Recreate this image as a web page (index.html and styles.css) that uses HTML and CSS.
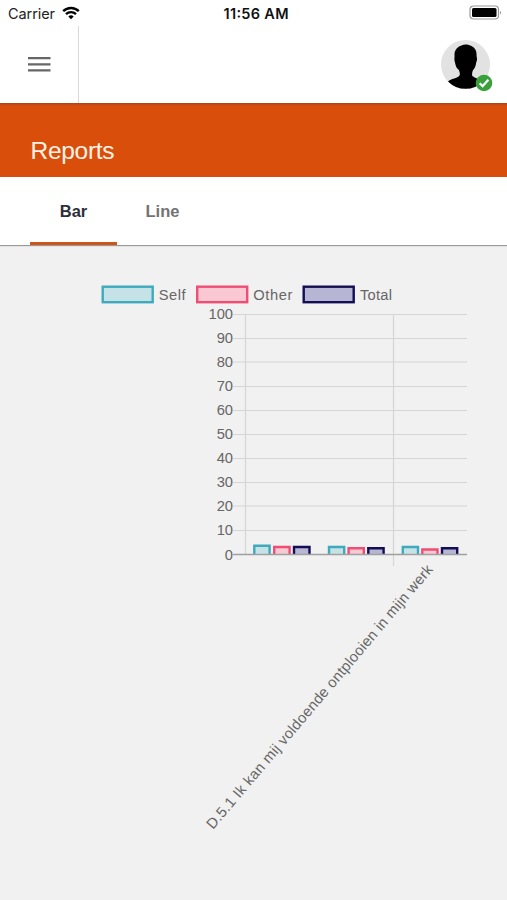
FILE: index.html
```
<!DOCTYPE html>
<html lang="en">
<head>
  <meta charset="UTF-8" />
  <title>Reports</title>
  <meta name="viewport" content="width=device-width, initial-scale=1" />
  <link rel="stylesheet" href="styles.css">
</head>
<body>
  <div class="statusbar">
    <div class="carrier">
      <svg class="carrier-name" width="48" height="20"><text x="0" y="16" textLength="47">Carrier</text></svg>
      <svg class="wifi" width="18" height="14" viewBox="0 0 18 14">
        <path d="M1.2 5.1a11.2 11.2 0 0 1 15.6 0" />
        <path d="M4 8.1a7.2 7.2 0 0 1 10 0" />
        <path class="wifi-dot" d="M9 13.2 6.3 10.5a3.9 3.9 0 0 1 5.4 0z" />
      </svg>
    </div>
    <svg class="clock" width="68" height="20"><text x="2.500" y="16" textLength="65">11:56 AM</text></svg>
    <svg class="battery" width="33" height="16" viewBox="0 0 33 16">
      <rect class="battery-case" x="1" y="1" width="28.5" height="13" rx="3.5" />
      <rect x="3" y="3" width="24.5" height="9" rx="1.5" />
      <path class="battery-tip" d="M31 5.5q1.8 2 0 4z" />
    </svg>
  </div>

  <header class="topbar">
    <div class="menu">
      <svg width="23" height="17" viewBox="0 0 23 17">
        <path d="M0 2.2h22.5M0 8.3h22.5M0 14.4h22.5" />
      </svg>
    </div>
    <div class="avatar">
      <svg width="53" height="53" viewBox="0 0 53 53">
        <circle cx="24.5" cy="24.5" r="24.5" fill="#e2e2e2" />
        <path d="M7 41.5C10 38.5 16.500 38.500 18.500 35.500C19.300 34 18.600 31.500 17.500 29.500C15.600 28.500 14.700 26 14 22.500C12.800 19.500 13.800 17.500 13.500 15C13.200 10 17 6.200 20.500 5.400C23.500 3.600 28 4.500 30.500 5.900C34.500 8 36 11.500 35.500 16C36.200 18 36.300 20 35.200 22.500C34.800 25.500 34 28 32.500 29.500C31.200 31.500 30.800 34 31.300 36C34 38.500 39 39 42 41.500A24.500 24.500 0 0 1 7 41.500Z" />
        <circle cx="43" cy="43" r="8.3" fill="#39a03c" />
        <path class="check" d="M38.700 43.300 41.600 46.200 47.400 39.800" />
      </svg>
    </div>
  </header>

  <div class="title">
    <svg width="90" height="34"><text x="0.500" y="25" textLength="84">Reports</text></svg>
  </div>

  <nav class="tabs">
    <div class="tab active">Bar</div>
    <div class="tab">Line</div>
  </nav>

  <main class="report">
    <svg class="chart" width="507" height="580" viewBox="0 284 507 580">
      <g class="bars">
        <rect class="self" x="102.700" y="286.700" width="50" height="15.500" />
        <rect class="other" x="197.200" y="286.700" width="50" height="15.500" />
        <rect class="total" x="303.700" y="286.700" width="50" height="15.500" />
      </g>
      <g class="legend">
        <text x="158.700" y="299.500" textLength="27">Self</text>
        <text x="253.300" y="299.500" textLength="39">Other</text>
        <text x="360" y="299.500" textLength="32">Total</text>
      </g>

      <g class="grid">
        <path d="M233 314.500H467M233 338.500H467M233 362H467M233 386.500H467M233 410.500H467M233 434.500H467M233 458.500H467M233 482.500H467M233 506H467M233 530.500H467" />
        <path d="M245.500 314V555M393.500 314V566" />
      </g>

      <g class="ticks">
        <text x="233" y="319.200">100</text>
        <text x="233" y="343.200">90</text>
        <text x="233" y="367.200">80</text>
        <text x="233" y="391.300">70</text>
        <text x="233" y="415.300">60</text>
        <text x="233" y="439.300">50</text>
        <text x="233" y="463.300">40</text>
        <text x="233" y="487.400">30</text>
        <text x="233" y="511.400">20</text>
        <text x="233" y="535.400">10</text>
        <text x="233" y="559.500">0</text>
      </g>

      <!-- bars are open at the bottom -->
      <g class="bars">
        <path class="self" d="M254.300 554V545.800H269.600V554" />
        <path class="other" d="M274.200 554V547H289.600V554" />
        <path class="total" d="M294 554V547H309.500V554" />
        <path class="self" d="M329 554V547H344.200V554" />
        <path class="other" d="M348.600 554V548.200H363.800V554" />
        <path class="total" d="M368.300 554V548.200H383.600V554" />
        <path class="self" d="M402.800 554V547H418V554" />
        <path class="other" d="M422.300 554V549.500H437.500V554" />
        <path class="total" d="M442 554V548.200H457.200V554" />
      </g>
      <path class="zero" d="M233 554.500H467" />

      <text class="xlabel" x="0" y="0" textLength="341" transform="translate(433.500 570) rotate(-49.700)">D.5.1 Ik kan mij voldoende ontplooien in mijn werk</text>
    </svg>
  </main>
</body>
</html>
```
FILE: styles.css
```
* {
  box-sizing: border-box;
}
body {
  margin: 0;
  height: 900px;
  overflow: hidden;
  background: #f1f1f1;
  font-family: "Liberation Sans", Arial, sans-serif;
  color: #666;
}
svg {
  display: block;
}
.statusbar {
  display: grid;
  grid-template-columns: 1fr auto 1fr;
  align-items: center;
  height: 26px;
  padding: 0 5px 0 8px;
  background: #fff;
  font-family: Inter, sans-serif;
  font-size: 14.5px;
}
.carrier {
  display: flex;
  align-items: center;
  gap: 6px;
}
.carrier-name {
  fill: #222;
}
.wifi {
  fill: none;
  stroke: #000;
  stroke-width: 2.4;
}
.wifi .wifi-dot {
  fill: #000;
  stroke: none;
}
.clock {
  font-weight: 600;
  fill: #111;
}
.battery {
  justify-self: end;
}
.battery-case {
  fill: none;
  stroke: #999;
  stroke-width: 1.2;
}
.battery-tip {
  fill: #888;
}
.topbar {
  display: flex;
  justify-content: space-between;
  height: 77px;
  padding-right: 13px;
  background: #fff;
}
.menu {
  display: flex;
  width: 79px;
  padding: 30px 0 0 28px;
  border-right: 1px solid #d9d9d9;
}
.menu path {
  stroke: #666;
  stroke-width: 2.3;
}
.avatar {
  padding-top: 14px;
}
.check {
  fill: none;
  stroke: #fff;
  stroke-width: 2.3;
}
.title {
  height: 74px;
  padding: 31px 0 0 30px;
  background: linear-gradient(#a8451a, #da4e0b 3px);
  font-size: 24.5px;
}
.title text {
  fill: #fff3e6;
}
.tabs {
  display: flex;
  height: 68px;
  padding-left: 30px;
  background: #fff;
  box-shadow: 0 1px 1px #999;
  font-size: 16.5px;
  font-weight: bold;
}
.tab {
  width: 87px;
  line-height: 69px;
  text-align: center;
  color: #737373;
}
.tab:last-child {
  width: 91px;
}
.tab.active {
  color: #2c2f3a;
  border-bottom: 3px solid #cf5519;
}
.report {
  padding-top: 39px;
}
.chart {
  font-size: 14.7px;
  fill: #666;
}
.grid {
  fill: none;
  stroke: #d5d5d5;
  stroke-width: 1.2;
}
.ticks text,
.xlabel {
  text-anchor: end;
}
.bars {
  stroke-width: 2.4;
}
.bars .self {
  fill: #c5e3e7;
  stroke: #3fa9bd;
}
.bars .other {
  fill: #f9c8d2;
  stroke: #ef4d76;
}
.bars .total {
  fill: #b7b5d4;
  stroke: #120d55;
}
.zero {
  stroke: #a0a0a0;
  stroke-width: 1.3;
}
```
